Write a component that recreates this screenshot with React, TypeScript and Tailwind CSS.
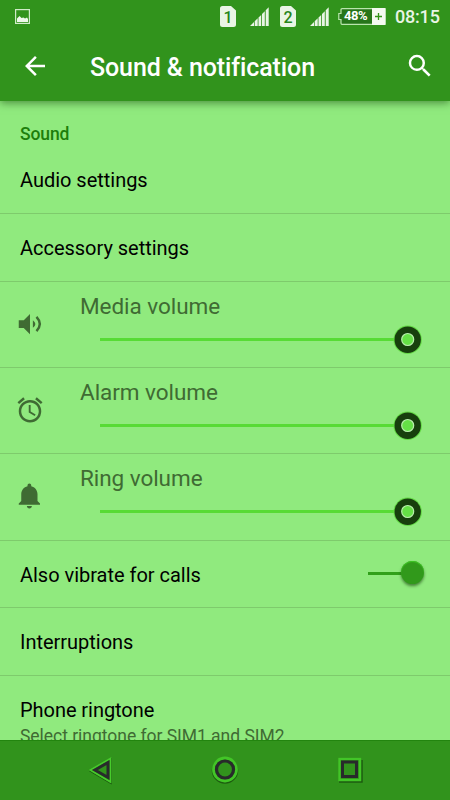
import { MdAlarm, MdArrowBack, MdSearch } from 'react-icons/md';
import type { ReactNode } from 'react';

function SimIcon({ slot }: { slot: number }) {
  return (
    <div className="relative h-[21px] w-4">
      <svg viewBox="0 0 16 21" className="h-[21px] w-4 fill-[#e9f5e5]">
        <path d="M2.500 0H11L16 4.500V18.500a2.500 2.500 0 0 1-2.500 2.500H2.500A2.500 2.500 0 0 1 0 18.500V2.500A2.500 2.500 0 0 1 2.500 0z" />
      </svg>
      <span className="absolute inset-0 text-center text-[16px] leading-[23px] font-medium text-[#26851a]">{slot}</span>
    </div>
  );
}

function SignalIcon() {
  return (
    <svg viewBox="0 0 20 20" className="h-5 w-5 fill-[#e9f5e5]">
      <path d="M0 20L4 16V20zM4.700 15.300L7.700 12.300V20H4.700zM8.500 11.500L11.200 9V20H8.500zM12 8L14.800 5.300V20H12zM15.700 4.300L18.700 1.300V20H15.700z" />
    </svg>
  );
}

function BatteryIcon() {
  return (
    <div className="relative h-[17px] w-[48px]">
      <svg viewBox="0 0 48 17" className="h-[17px] w-[48px]">
        <path d="M4 .7H47V16.300H4Q3 16.300 3 15.300V11.500H.8V5.500H3V1.700Q3 .7 4 .7z" fill="#26751a" stroke="#b9e5ad" strokeWidth="1.200" />
        <path d="M34 0H46.500Q47.500 0 47.500 1V16Q47.500 17 46.500 17H34z" fill="#f4faf2" />
        <path d="M40.500 5V12M37 8.500H44" stroke="#329419" strokeWidth="1.300" />
      </svg>
      <span className="absolute top-0 left-[6px] text-[13px] leading-[16px] font-bold tracking-[-0.5px] text-white">48%</span>
    </div>
  );
}

function VolumeIcon() {
  return (
    <svg viewBox="0 0 24 24" className="size-[30px]">
      <path d="M3 8.900v6.200h4l5 5V3.900l-5 5z" fill="currentColor" />
      <path d="M14.300 9Q18.300 12 14.300 15z" fill="currentColor" />
      <path d="M17.200 6.300Q22.500 12 17.200 17.700" fill="none" stroke="currentColor" strokeWidth="1.900" />
    </svg>
  );
}

function BellIcon() {
  return (
    <svg viewBox="0 0 24 24" className="size-[30px]" fill="currentColor">
      <path d="M11.500 22c1.100 0 2-.9 2-2h-4c0 1.100.9 2 2 2zm6.500-6v-5.500c0-3.070-2.130-5.640-5-6.320V3.500c0-.83-.67-1.500-1.500-1.500S10 2.670 10 3.500v.68c-2.870.68-5 3.250-5 6.320V16l-2 2v1h17v-1l-2-2z" />
    </svg>
  );
}

function Row({ title, className = 'h-[68px]', children }: { title: string; className?: string; children?: ReactNode }) {
  return (
    <div className={`flex items-center justify-between border-b border-[#7ecb6c] px-5 pt-px ${className}`}>
      <span className="text-[20px] tracking-[-0.02px] text-black">{title}</span>
      {children}
    </div>
  );
}

function VolumeRow({ title, icon, className = 'h-[86px]' }: { title: string; icon: ReactNode; className?: string }) {
  return (
    <div className={`flex border-b border-[#7ecb6c] pl-[15px] text-[#3f6b33] ${className}`}>
      <div className="w-[65px] pt-[27px]">{icon}</div>
      <div className="pt-[10px]">
        <div className="text-[22.5px] leading-[28px] tracking-[-0.05px]">{title}</div>
        <div className="ml-5 flex h-[39px] items-center">
          <div className="h-[3px] w-[294px] bg-[#57db35]" />
          <svg viewBox="0 0 30 30" className="-ml-px size-[30px]">
            <circle cx="14.700" cy="14.700" r="14.200" fill="#64d946" />
            <circle cx="14.700" cy="14.700" r="13.200" fill="#173f0d" />
            <circle cx="14.700" cy="14.500" r="6" fill="#65e046" stroke="#b8efac" strokeWidth="1.200" />
          </svg>
        </div>
      </div>
    </div>
  );
}

export default function App() {
  return (
    <div className="flex h-[800px] w-[450px] flex-col overflow-hidden bg-[#90ea7e] font-[Roboto,sans-serif]">
      <div className="z-10 h-[101px] bg-[#31931c] shadow-[0_2px_8px_rgba(30,80,20,0.6)]">
        <div className="flex h-[32px] items-center pr-[9px] pl-[15px]">
          <svg viewBox="0 0 15 15" className="size-[15px]">
            <rect x=".6" y=".6" width="13.800" height="13.800" fill="none" stroke="#cfebc7" strokeWidth="1.200" />
            <path d="M2 13V9.500L4.500 7L6.500 9L8.500 8.500L10 9.500L12 8.500L13 10V13z" fill="#eef8eb" />
          </svg>
          <div className="ml-[190px] flex shrink-0 items-center">
            <SimIcon slot={1} />
            <div className="ml-[14px]"><SignalIcon /></div>
            <div className="ml-[10px]"><SimIcon slot={2} /></div>
            <div className="ml-[14px]"><SignalIcon /></div>
            <div className="ml-[8px]"><BatteryIcon /></div>
          </div>
          <span className="ml-[9px] text-[18px] font-medium tracking-[-0.2px] text-[#e9f5e5]">08:15</span>
        </div>
        <div className="flex h-[68px] items-center pl-5 text-white">
          <MdArrowBack className="size-[30px]" />
          <h1 className="ml-10 w-[315px] pt-[3px] text-[25px] font-medium tracking-[-0.1px]">Sound &amp; notification</h1>
          <MdSearch className="size-[30px]" />
        </div>
      </div>

      <div className="h-[639px] overflow-hidden">
        <div className="h-[45px] px-5 pt-[21px] text-[17.5px] leading-6 font-medium tracking-[-0.1px] text-[#1d7e0b]">Sound</div>
        <Row title="Audio settings" />
        <Row title="Accessory settings" />
        <VolumeRow title="Media volume" icon={<VolumeIcon />} />
        <VolumeRow title="Alarm volume" icon={<MdAlarm className="size-[30px]" />} />
        <VolumeRow title="Ring volume" icon={<BellIcon />} className="h-[87px]" />
        <Row title="Also vibrate for calls" className="h-[67px]">
          <div className="mr-[6px] mb-[3px] flex items-center">
            <div className="h-[3px] w-[34px] bg-[#31a01a]" />
            <div className="-ml-px mb-[2px] size-[23px] rounded-full bg-[#31991b] shadow-[0_2px_3px_rgba(20,60,10,0.6),inset_0_1px_1px_#3fca24]" />
          </div>
        </Row>
        <Row title="Interruptions" />
        <div className="px-5 pt-[20px]">
          <div className="text-[20px] leading-7 tracking-[-0.05px] text-black">Phone ringtone</div>
          <div className="text-[17.5px] leading-6 tracking-[-0.03px] text-[#3f6b33]">Select ringtone for SIM1 and SIM2</div>
        </div>
      </div>

      <div className="z-10 flex h-[60px] items-center border-t border-[#22850f] bg-[#31931c] pb-[2px] pl-[85px]">
        <svg viewBox="0 0 30 30" className="size-[30px]" fill="none">
          <path d="M4.500 16L26.500 3V29z" stroke="#1d5c10" strokeWidth="1" />
          <path d="M5.500 15L25.500 3.500V27z" stroke="#47cb2b" strokeWidth="1.800" />
          <path d="M10 15L23 7.500V22.500z" stroke="#282b2b" strokeWidth="3" />
        </svg>
        <svg viewBox="0 0 30 30" className="ml-[95px] size-[30px]" fill="none">
          <circle cx="15" cy="15.500" r="12.500" stroke="#1d5c10" strokeWidth="1.500" />
          <circle cx="15" cy="14.500" r="11.500" stroke="#42c527" strokeWidth="2.800" />
          <circle cx="15" cy="14.500" r="8.500" stroke="#282b2b" strokeWidth="3.200" />
        </svg>
        <svg viewBox="0 0 30 30" className="ml-[95px] size-[30px]" fill="none">
          <path d="M4 27H27V5" stroke="#1d5c10" strokeWidth="1.500" />
          <rect x="4.500" y="4" width="20.500" height="21" stroke="#42c527" strokeWidth="2.300" />
          <rect x="7.500" y="7" width="14" height="14.500" stroke="#282b2b" strokeWidth="3" />
        </svg>
      </div>
    </div>
  );
}
